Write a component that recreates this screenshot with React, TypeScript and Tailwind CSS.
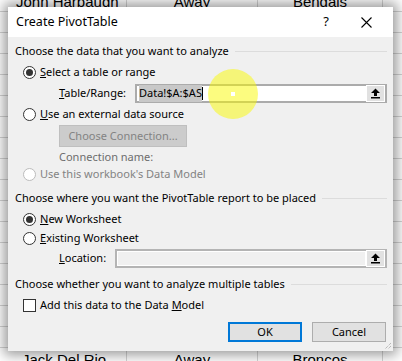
import React from "react";

const rows = Array.from({ length: 16 });

function Radio({ checked, disabled }: { checked?: boolean; disabled?: boolean }) {
  return (
    <span
      className={
        "flex h-[13px] w-[13px] shrink-0 items-center justify-center rounded-full border bg-white " +
        (disabled ? "border-[#bcbcbc]" : "border-[#333333]")
      }
    >
      {checked ? <span className="h-[7px] w-[7px] rounded-full bg-[#333333]" /> : null}
    </span>
  );
}

function UpButton() {
  return (
    <div className="flex h-[17px] w-[19px] shrink-0 items-center justify-center border border-white bg-[#e1e1e1]">
      <svg width="11" height="11" viewBox="0 0 11 11">
        <path d="M5.5 0.5 L10 5 L7 5 L7 8 L4 8 L4 5 L1 5 Z" fill="#000" />
        <rect x="1" y="9" width="9" height="1.5" fill="#000" />
      </svg>
    </div>
  );
}

function Header({ text }: { text: string }) {
  return (
    <div className="flex h-[16px] items-center gap-[6px]">
      <span className="whitespace-nowrap">{text}</span>
      <span className="h-px flex-1 bg-[#dcdcdc]" />
    </div>
  );
}

export default function App() {
  return (
    <div className="relative h-[361px] w-[402px] overflow-hidden bg-white font-['Noto_Sans',sans-serif]">
      {/* spreadsheet behind */}
      <div className="flex flex-col font-['Liberation_Sans',sans-serif] text-[15px] text-black">
        <div className="-mt-[9px] grid h-[21px] grid-cols-[127px_131px_125px_1fr] border-b border-[#d4d4d4]">
          <div className="border-r border-[#d4d4d4] pl-[16px] leading-[21px]">John Harbaugh</div>
          <div className="border-r border-[#d4d4d4] text-center leading-[21px]">Away</div>
          <div className="border-r border-[#d4d4d4] text-center leading-[21px]">Bengals</div>
          <div />
        </div>
        {rows.map((_, i) => (
          <div key={i} className="grid h-[21px] grid-cols-[127px_131px_125px_1fr] border-b border-[#d4d4d4]">
            <div className="border-r border-[#d4d4d4]" />
            <div className="border-r border-[#d4d4d4]" />
            <div className="border-r border-[#d4d4d4]" />
            <div />
          </div>
        ))}
        <div className="grid h-[21px] grid-cols-[127px_131px_125px_1fr]">
          <div className="border-r border-[#d4d4d4] pl-[22px] leading-[24px]">Jack Del Rio</div>
          <div className="border-r border-[#d4d4d4] text-center leading-[24px]">Away</div>
          <div className="border-r border-[#d4d4d4] text-center leading-[24px]">Broncos</div>
          <div />
        </div>
      </div>

      {/* dialog */}
      <div className="absolute left-[8px] top-[7px] flex h-[344px] w-[385px] flex-col bg-[#f0f0f0] text-[11px] text-black shadow-[0_0_12px_4px_rgba(0,0,0,0.4)]">
        <div className="flex h-[30px] items-center bg-white pl-[8px] text-[12.5px]">
          <span className="flex-1">Create PivotTable</span>
          <span className="mr-[32px] text-[13px]">?</span>
          <svg width="11" height="11" viewBox="0 0 11 11" className="mr-[21px]">
            <path d="M0.5 0.5 L10.5 10.5 M10.5 0.5 L0.5 10.5" stroke="#000" strokeWidth="1.1" />
          </svg>
        </div>

        <div className="flex flex-col pl-[7px] pr-[6px]">
          <div className="mt-[6px]">
            <Header text="Choose the data that you want to analyze" />
          </div>

          <div className="ml-[8px] mt-[5px] flex h-[16px] items-center gap-[4px]">
            <Radio checked />
            <span>
              <span className="underline">S</span>elect a table or range
            </span>
          </div>

          <div className="mt-[4px] flex h-[19px] items-center pl-[44px]">
            <span className="w-[76px] shrink-0">
              <span className="underline">T</span>able/Range:
            </span>
            <div className="flex h-[19px] flex-1 items-center border-2 border-[#ababab] bg-white pl-[2px]">
              <span className="bg-[#c8c8c8]">Data!$A:$AS</span>
              <span className="h-[13px] w-px bg-black" />
              <span className="flex-1" />
              <UpButton />
            </div>
          </div>

          <div className="ml-[8px] mt-[3px] flex h-[16px] items-center gap-[4px]">
            <Radio />
            <span>
              <span className="underline">U</span>se an external data source
            </span>
          </div>

          <div className="ml-[44px] mt-[3px] flex h-[22px] w-[128px] items-center justify-center border border-[#bfbfbf] bg-[#cccccc] text-[#838383]">
            Choose Connection...
          </div>

          <div className="ml-[44px] mt-[3px] flex h-[14px] items-center text-[#6d6d6d]">Connection name:</div>

          <div className="ml-[8px] mt-[2px] flex h-[16px] items-center gap-[4px] text-[#838383]">
            <Radio disabled />
            <span>Use this workbook's Data Model</span>
          </div>

          <div className="mt-[8px]">
            <Header text="Choose where you want the PivotTable report to be placed" />
          </div>

          <div className="ml-[8px] mt-[5px] flex h-[16px] items-center gap-[4px]">
            <Radio checked />
            <span>
              <span className="underline">N</span>ew Worksheet
            </span>
          </div>

          <div className="ml-[8px] mt-[3px] flex h-[16px] items-center gap-[4px]">
            <Radio />
            <span>
              <span className="underline">E</span>xisting Worksheet
            </span>
          </div>

          <div className="mt-[3px] flex h-[19px] items-center pl-[44px]">
            <span className="w-[56px] shrink-0">
              <span className="underline">L</span>ocation:
            </span>
            <div className="flex h-[19px] flex-1 items-center border-2 border-[#b4b4b4] bg-white">
              <div className="mx-[1px] h-[13px] flex-1 bg-[#f0f0f0]" />
              <UpButton />
            </div>
          </div>

          <div className="mt-[8px]">
            <Header text="Choose whether you want to analyze multiple tables" />
          </div>

          <div className="ml-[8px] mt-[5px] flex h-[16px] items-center gap-[4px]">
            <span className="h-[13px] w-[13px] shrink-0 border border-[#333333] bg-white" />
            <span>
              Add this data to the Data <span className="underline">M</span>odel
            </span>
          </div>

          <div className="mt-[9px] flex justify-end gap-[10px] pr-[1px]">
            <div className="flex h-[20px] w-[74px] items-center justify-center border-2 border-[#0078d7] bg-[#e1e1e1]">OK</div>
            <div className="flex h-[20px] w-[74px] items-center justify-center border border-[#adadad] bg-[#e1e1e1]">Cancel</div>
          </div>
        </div>

        {/* resize grip */}
        <svg width="8" height="8" viewBox="0 0 8 8" className="absolute bottom-[1px] right-[1px]">
          <path d="M7 1 L1 7 M7 4 L4 7" stroke="#a0a0a0" strokeWidth="1" strokeDasharray="1 1" />
        </svg>
      </div>

      {/* mouse highlight */}
      <div className="absolute left-[208px] top-[69px] flex h-[50px] w-[50px] items-center justify-center rounded-full bg-[rgba(250,250,0,0.5)]">
        <span className="h-[4px] w-[4px] bg-white" />
      </div>
    </div>
  );
}
